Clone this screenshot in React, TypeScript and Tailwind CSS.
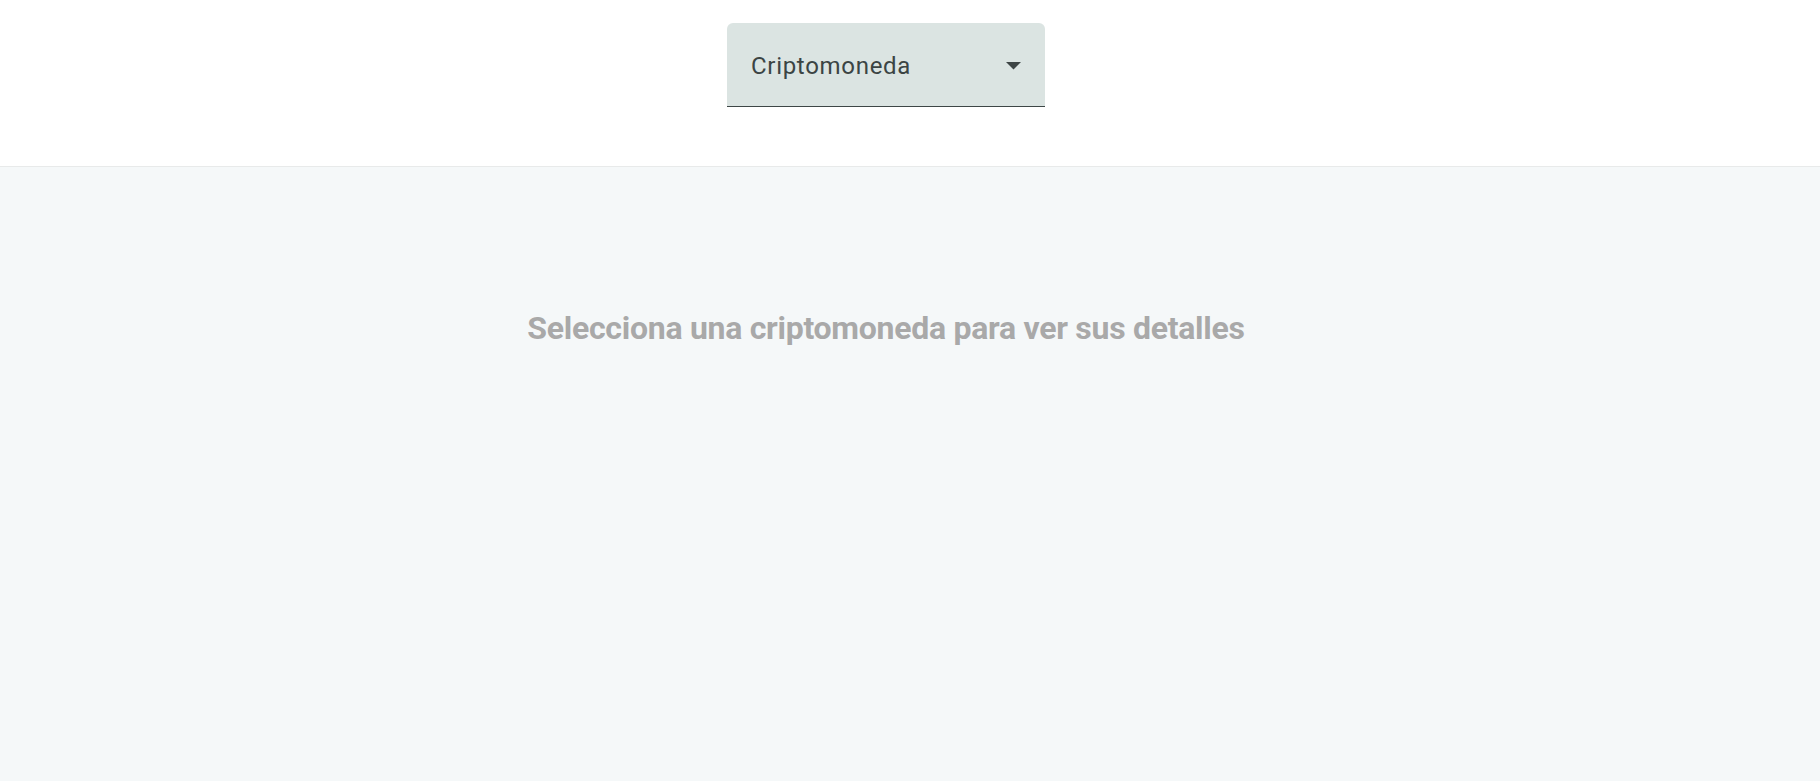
const App = () => {
    return (
        <div className="min-h-screen flex flex-col bg-white font-['Roboto',_'Liberation_Sans',_sans-serif]">
            <div className="h-[167px] border-b border-[#e8eaea] pr-[48px] flex justify-center pt-[23px]">
                <div className="w-[318px] h-[84px] rounded-t-[6px] bg-[#dbe4e2] border-b border-[#3d4646] flex items-center justify-between pl-[24px] pr-[24px]">
                    <span className="mt-[2px] text-[24px] tracking-[0.7px] text-[#3b4444]">Criptomoneda</span>
                    <svg width="15" height="8" viewBox="0 0 15 8" className="mt-[2px]">
                        <path d="M0 0 L15 0 L7.5 7.5 Z" fill="#3d4545" />
                    </svg>
                </div>
            </div>
            <div className="flex-1 bg-[#f5f8f9] pr-[48px] pt-[142px] flex justify-center">
                <h2 className="text-[32px] leading-[1.2] font-bold tracking-[-0.28px] text-[#a9a9a9]">
                    Selecciona una criptomoneda para ver sus detalles
                </h2>
            </div>
        </div>
    )
}

export default App
